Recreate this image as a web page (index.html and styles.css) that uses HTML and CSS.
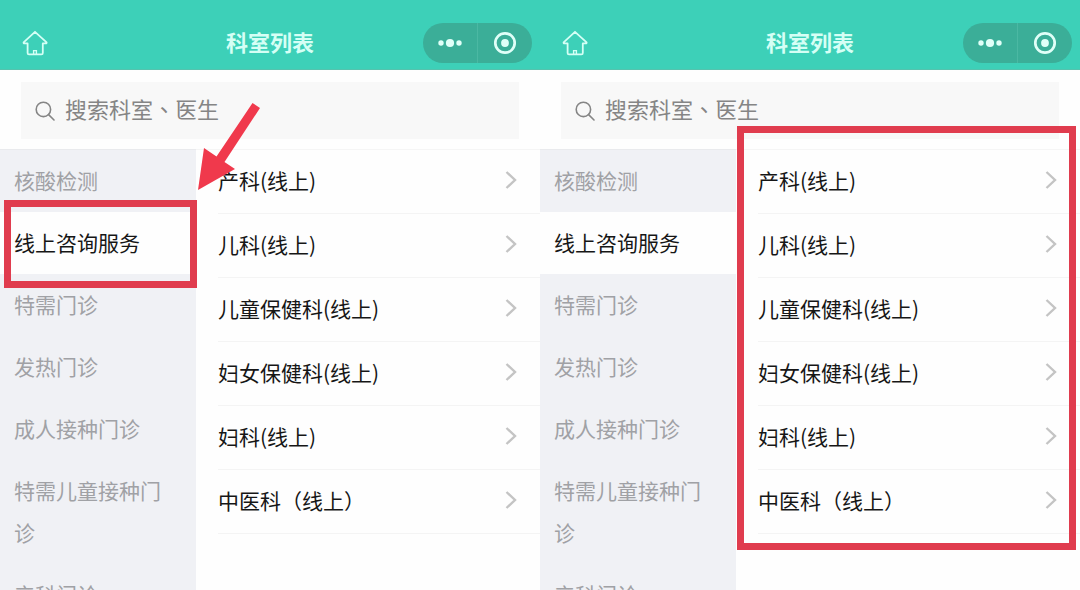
FILE: index.html
```html
<!DOCTYPE html>
<html lang="zh-CN">
<head>
    <meta charset="UTF-8">
    <meta name="viewport" content="width=device-width, initial-scale=1.0">
    <title>科室列表</title>
    <link rel="stylesheet" href="styles.css">
</head>
<body>
    <!-- shared icons -->
    <svg class="sprite" aria-hidden="true">
        <symbol id="icon-home" viewBox="0 0 26 26">
            <path d="M13 1.8 L1.6 12.4 Q1.4 13.4 2.4 13.4 H5.6 V23 Q5.6 24.4 7 24.4 H19.4 Q20.8 24.4 20.8 23 V13.4 H23.8 Q24.8 13.4 24.6 12.4 Z" fill="none" stroke="currentColor" stroke-width="1.8" stroke-linejoin="round"/>
            <path d="M11.6 24 V20.6 H14.4 V24" fill="none" stroke="currentColor" stroke-width="1.4"/>
        </symbol>
        <symbol id="icon-dots" viewBox="0 0 26 20">
            <circle cx="4" cy="10" r="2.7" fill="currentColor"/>
            <circle cx="13" cy="10" r="4.1" fill="currentColor"/>
            <circle cx="22" cy="10" r="2.7" fill="currentColor"/>
        </symbol>
        <symbol id="icon-target" viewBox="0 0 24 24">
            <circle cx="12" cy="12" r="9.7" fill="none" stroke="currentColor" stroke-width="2.7"/>
            <circle cx="12" cy="12" r="3.9" fill="currentColor"/>
        </symbol>
        <symbol id="icon-search" viewBox="0 0 20 20">
            <circle cx="8.4" cy="8.4" r="7.2" fill="none" stroke="currentColor" stroke-width="1.6"/>
            <path d="M13.6 13.6 L19 19" stroke="currentColor" stroke-width="1.6" stroke-linecap="round"/>
        </symbol>
        <symbol id="icon-chevron" viewBox="0 0 12 20">
            <path d="M1.5 2 L10 10 L1.5 18" fill="none" stroke="currentColor" stroke-width="2.4"/>
        </symbol>
    </svg>

    <main class="screens">
        <section class="screen">
            <header class="navbar">
                <button class="home-btn" aria-label="首页"><svg><use href="#icon-home"/></svg></button>
                <h1 class="title">科室列表</h1>
                <div class="capsule">
                    <button aria-label="更多"><svg class="dots"><use href="#icon-dots"/></svg></button>
                    <button aria-label="关闭"><svg class="target"><use href="#icon-target"/></svg></button>
                </div>
            </header>
            <div class="search">
                <label class="search-box">
                    <svg><use href="#icon-search"/></svg>
                    <input type="text" lang="zh-TW" placeholder="搜索科室、医生" aria-label="搜索科室、医生">
                </label>
            </div>
            <div class="content">
                <nav class="categories">
                    <button class="category">核酸检测</button>
                    <button class="category active marked">线上咨询服务</button>
                    <button class="category">特需门诊</button>
                    <button class="category">发热门诊</button>
                    <button class="category">成人接种门诊</button>
                    <button class="category">特需儿童接种门诊</button>
                    <button class="category">产科门诊</button>
                </nav>
                <div class="departments">
                    <a class="department" href="#">产科(线上)<svg><use href="#icon-chevron"/></svg></a>
                    <a class="department" href="#">儿科(线上)<svg><use href="#icon-chevron"/></svg></a>
                    <a class="department" href="#">儿童保健科(线上)<svg><use href="#icon-chevron"/></svg></a>
                    <a class="department" href="#">妇女保健科(线上)<svg><use href="#icon-chevron"/></svg></a>
                    <a class="department" href="#">妇科(线上)<svg><use href="#icon-chevron"/></svg></a>
                    <a class="department" href="#">中医科（线上）<svg><use href="#icon-chevron"/></svg></a>
                    <svg class="arrow" viewBox="0 0 64 90" aria-hidden="true">
                        <path d="M56.5 0 L64 5 L28.5 59 L39 66 L2 87 L8 45 L20.5 53.5 Z" fill="currentColor"/>
                    </svg>
                </div>
            </div>
        </section>

        <section class="screen">
            <header class="navbar">
                <button class="home-btn" aria-label="首页"><svg><use href="#icon-home"/></svg></button>
                <h1 class="title">科室列表</h1>
                <div class="capsule">
                    <button aria-label="更多"><svg class="dots"><use href="#icon-dots"/></svg></button>
                    <button aria-label="关闭"><svg class="target"><use href="#icon-target"/></svg></button>
                </div>
            </header>
            <div class="search">
                <label class="search-box">
                    <svg><use href="#icon-search"/></svg>
                    <input type="text" lang="zh-TW" placeholder="搜索科室、医生" aria-label="搜索科室、医生">
                </label>
            </div>
            <div class="content">
                <nav class="categories">
                    <button class="category">核酸检测</button>
                    <button class="category active">线上咨询服务</button>
                    <button class="category">特需门诊</button>
                    <button class="category">发热门诊</button>
                    <button class="category">成人接种门诊</button>
                    <button class="category">特需儿童接种门诊</button>
                    <button class="category">产科门诊</button>
                </nav>
                <div class="departments marked">
                    <a class="department" href="#">产科(线上)<svg><use href="#icon-chevron"/></svg></a>
                    <a class="department" href="#">儿科(线上)<svg><use href="#icon-chevron"/></svg></a>
                    <a class="department" href="#">儿童保健科(线上)<svg><use href="#icon-chevron"/></svg></a>
                    <a class="department" href="#">妇女保健科(线上)<svg><use href="#icon-chevron"/></svg></a>
                    <a class="department" href="#">妇科(线上)<svg><use href="#icon-chevron"/></svg></a>
                    <a class="department" href="#">中医科（线上）<svg><use href="#icon-chevron"/></svg></a>
                </div>
            </div>
        </section>
    </main>
</body>
</html>
```
FILE: styles.css
```css
* {
    margin: 0;
    padding: 0;
    box-sizing: border-box;
}

body {
    font-family: "Noto Sans CJK SC", sans-serif;
    font-size: 21px;
    background: #fefefe;
    color: #161616;
}

button {
    border: none;
    background: none;
    font: inherit;
    color: inherit;
    cursor: pointer;
}

svg {
    display: block;
}

.sprite {
    display: none;
}

.screens {
    display: grid;
    grid-template-columns: 1fr 1fr;
    height: 100vh;
    overflow: hidden;
}

.screen {
    display: flex;
    flex-direction: column;
    min-width: 0;
}

/* top bar */
.navbar {
    display: grid;
    grid-template-columns: 1fr auto 1fr;
    align-items: center;
    height: 70px;
    padding: 16px 8px 0 22px;
    background: #3dd0b8;
    border-bottom: 1px solid #55c3ae;
    color: #d5fff5;
    flex-shrink: 0;
}

.home-btn {
    justify-self: start;
}

.home-btn svg {
    width: 26px;
    height: 26px;
}

.title {
    font-size: 22px;
    line-height: 32px;
    font-weight: 700;
    margin-right: 14px;
    padding-bottom: 4px;
}

.capsule {
    justify-self: end;
    display: flex;
    width: 109px;
    height: 40px;
    border-radius: 20px;
    background: #3bae98;
    color: #e0fff8;
}

.capsule button {
    flex: 1;
    display: flex;
    align-items: center;
    justify-content: center;
}

.capsule button + button {
    border-left: 1px solid #4bb8a3;
}

.dots {
    width: 26px;
    height: 20px;
}

.target {
    width: 24px;
    height: 24px;
}

/* search */
.search {
    padding: 12px 21px 10px;
    flex-shrink: 0;
}

.search-box {
    display: flex;
    align-items: center;
    gap: 10px;
    height: 57px;
    padding: 0 14px;
    background: #f8f8f8;
    color: #858585;
}

.search-box svg {
    width: 20px;
    height: 20px;
}

.search-box input {
    flex: 1;
    min-width: 0;
    padding-bottom: 6px;
    border: none;
    outline: none;
    background: none;
    font-family: "Noto Sans CJK TC", sans-serif;
    font-size: 22px;
}

.search-box input::placeholder {
    color: #858585;
}

/* lists */
.content {
    flex: 1;
    display: flex;
    min-height: 0;
}

.categories {
    width: 196px;
    flex-shrink: 0;
    background: #f0f1f5;
    border-top: 1px solid #e9eaed;
}

.category {
    display: block;
    width: 100%;
    padding: 9px 24px 11px 14px;
    line-height: 42px;
    text-align: left;
    color: #a0a1a5;
}

.category.active {
    background: #fefefe;
    color: #161616;
}

.departments {
    position: relative;
    flex: 1;
    align-self: flex-start;
    border-top: 1px solid #f5f5f5;
}

.department {
    display: flex;
    align-items: center;
    justify-content: space-between;
    height: 64px;
    margin-left: 22px;
    padding: 0 23px 4px 0;
    border-bottom: 1px solid #f4f4f4;
    color: inherit;
    text-decoration: none;
}

.department svg {
    width: 12px;
    height: 20px;
    color: #c4c4c4;
}

/* red marks */
.marked {
    position: relative;
}

.marked::after {
    content: "";
    position: absolute;
    border: 7px solid #e03c4e;
    pointer-events: none;
    z-index: 1;
}

.category.marked::after {
    inset: -12px -1px -14px 4px;
}

.departments.marked::after {
    inset: -24px 4px -16px 1px;
}

.arrow {
    position: absolute;
    top: -47px;
    left: 0;
    width: 64px;
    height: 90px;
    color: #f0394c;
}
```
